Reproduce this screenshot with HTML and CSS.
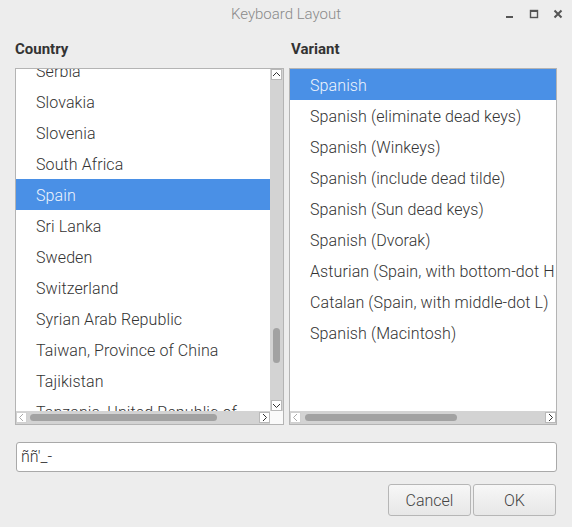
FILE: index.html
```html
<!DOCTYPE html>
<html lang="en">
<head>
    <meta charset="UTF-8">
    <title>Keyboard Layout</title>
    <link rel="stylesheet" href="styles.css">
</head>
<body>
    <div class="window">
        <div class="titlebar">
            <span class="title">Keyboard Layout</span>
            <div class="controls">
                <svg width="10" height="10" viewBox="0 0 10 10"><rect x="1" y="7" width="7" height="2" fill="#555"/></svg>
                <svg width="10" height="10" viewBox="0 0 10 10"><rect x="1.5" y="1.5" width="7" height="7" fill="none" stroke="#555" stroke-width="1.4"/><rect x="1" y="1" width="8" height="2" fill="#555"/></svg>
                <svg width="10" height="10" viewBox="0 0 10 10"><path d="M1.5 1.5 L8.5 8.5 M8.5 1.5 L1.5 8.5" stroke="#555" stroke-width="2"/></svg>
            </div>
        </div>

        <div class="columns">
            <div class="column">
                <h2>Country</h2>
                <div class="frame with-vscroll">
                    <div class="view">
                        <ul class="rows shifted">
                            <li>Serbia</li>
                            <li>Slovakia</li>
                            <li>Slovenia</li>
                            <li>South Africa</li>
                            <li class="selected">Spain</li>
                            <li>Sri Lanka</li>
                            <li>Sweden</li>
                            <li>Switzerland</li>
                            <li>Syrian Arab Republic</li>
                            <li>Taiwan, Province of China</li>
                            <li>Tajikistan</li>
                            <li>Tanzania, United Republic of</li>
                        </ul>
                    </div>
                    <div class="vscroll">
                        <span class="arrow">
                            <svg width="9" height="9" viewBox="0 0 9 9"><path d="M1 6 L4.5 2.5 L8 6" fill="none" stroke="#333" stroke-width="1"/></svg>
                        </span>
                        <div class="vtrough"><div class="vthumb"></div></div>
                        <span class="arrow">
                            <svg width="9" height="9" viewBox="0 0 9 9"><path d="M1 3 L4.5 6.5 L8 3" fill="none" stroke="#333" stroke-width="1"/></svg>
                        </span>
                    </div>
                    <div class="hscroll">
                        <span class="arrow faded">
                            <svg width="9" height="9" viewBox="0 0 9 9"><path d="M6 1 L2.5 4.5 L6 8" fill="none" stroke="#aaa" stroke-width="1"/></svg>
                        </span>
                        <div class="htrough"><div class="hthumb country-thumb"></div></div>
                        <span class="arrow">
                            <svg width="9" height="9" viewBox="0 0 9 9"><path d="M3 1 L6.5 4.5 L3 8" fill="none" stroke="#333" stroke-width="1"/></svg>
                        </span>
                    </div>
                    <div class="corner"></div>
                </div>
            </div>

            <div class="column">
                <h2 class="indent">Variant</h2>
                <div class="frame">
                    <div class="view">
                        <ul class="rows">
                            <li class="selected">Spanish</li>
                            <li>Spanish (eliminate dead keys)</li>
                            <li>Spanish (Winkeys)</li>
                            <li>Spanish (include dead tilde)</li>
                            <li>Spanish (Sun dead keys)</li>
                            <li>Spanish (Dvorak)</li>
                            <li>Asturian (Spain, with bottom-dot H and bottom-dot L)</li>
                            <li>Catalan (Spain, with middle-dot L)</li>
                            <li>Spanish (Macintosh)</li>
                        </ul>
                    </div>
                    <div class="hscroll">
                        <span class="arrow faded">
                            <svg width="9" height="9" viewBox="0 0 9 9"><path d="M6 1 L2.5 4.5 L6 8" fill="none" stroke="#aaa" stroke-width="1"/></svg>
                        </span>
                        <div class="htrough"><div class="hthumb variant-thumb"></div></div>
                        <span class="arrow">
                            <svg width="9" height="9" viewBox="0 0 9 9"><path d="M3 1 L6.5 4.5 L3 8" fill="none" stroke="#333" stroke-width="1"/></svg>
                        </span>
                    </div>
                </div>
            </div>
        </div>

        <div class="entry">ññ'_-</div>

        <div class="buttons">
            <button>Cancel</button>
            <button>OK</button>
        </div>
    </div>
</body>
</html>
```

FILE: styles.css
```css
body {
    margin: 0;
    background: #ededed;
    font-family: Roboto, "Liberation Sans", sans-serif;
    color: #333;
}
.window {
    width: 572px;
    height: 527px;
    overflow: hidden;
}
.titlebar {
    position: relative;
    height: 28px;
    display: flex;
    align-items: center;
    justify-content: center;
}
.title {
    font-size: 15px;
    font-weight: 300;
    color: #8a8a8a;
}
.controls {
    position: absolute;
    right: 9px;
    top: 9px;
    display: flex;
    gap: 14px;
}
.columns {
    display: grid;
    grid-template-columns: 269px 268px;
    gap: 5px;
    padding: 0 15px;
}
h2 {
    margin: 0;
    height: 39px;
    padding-top: 1px;
    line-height: 40px;
    font-size: 15px;
    font-weight: 700;
    color: #333;
}
h2.indent {
    padding-left: 2px;
}
.frame {
    height: 357px;
    box-sizing: border-box;
    border: 1px solid #b4b4b4;
    background: #fff;
    display: grid;
    grid-template-columns: 1fr;
    grid-template-rows: 1fr 13px;
}
.frame.with-vscroll {
    grid-template-columns: 1fr 13px;
}
.view {
    overflow: hidden;
    min-height: 0;
}
.rows {
    list-style: none;
    margin: 0;
    padding: 0;
}
.rows.shifted {
    margin-top: -14px;
}
.rows li {
    height: 30px;
    padding-top: 1px;
    line-height: 31px;
    padding-left: 20px;
    font-size: 16px;
    letter-spacing: 0.1px;
    font-weight: 300;
    white-space: nowrap;
    color: #333;
}
.rows li.selected {
    background: #4a90e6;
    color: #eef4fd;
}
.vscroll {
    grid-row: 1;
    grid-column: 2;
    background: #d3d3d3;
    display: flex;
    flex-direction: column;
    align-items: center;
}
.arrow {
    width: 11px;
    height: 11px;
    box-sizing: border-box;
    border: 1px solid #b9b9b9;
    background: #fff;
    display: flex;
    align-items: center;
    justify-content: center;
    flex: none;
}
.arrow.faded {
    border-color: #d0d0d0;
}
.vtrough {
    flex: 1;
    width: 100%;
    position: relative;
}
.vthumb {
    position: absolute;
    left: 3px;
    top: 248px;
    width: 7px;
    height: 35px;
    border-radius: 4px;
    background: #a2a2a2;
}
.hscroll {
    background: #d3d3d3;
    display: flex;
    align-items: center;
}
.htrough {
    flex: 1;
    height: 100%;
    position: relative;
}
.hthumb {
    position: absolute;
    top: 3px;
    height: 7px;
    border-radius: 4px;
    background: #a2a2a2;
}
.country-thumb {
    left: 3px;
    width: 187px;
}
.variant-thumb {
    left: 4px;
    width: 152px;
}
.corner {
    background: #fafafa;
}
.entry {
    margin: 17px 15px 0 16px;
    height: 30px;
    box-sizing: border-box;
    border: 1px solid #a9a9a9;
    border-radius: 3px;
    background: #fff;
    padding-left: 4px;
    line-height: 28px;
    font-size: 16px;
    font-weight: 300;
    color: #333;
}
.buttons {
    display: flex;
    justify-content: flex-end;
    gap: 2px;
    margin: 12px 16px 0 0;
}
button {
    width: 83px;
    height: 32px;
    border: 1px solid #b6b6b6;
    border-radius: 3px;
    background: linear-gradient(#f7f7f7, #e7e7e7);
    font-family: Roboto, "Liberation Sans", sans-serif;
    font-size: 16px;
    font-weight: 300;
    color: #444;
}
```
